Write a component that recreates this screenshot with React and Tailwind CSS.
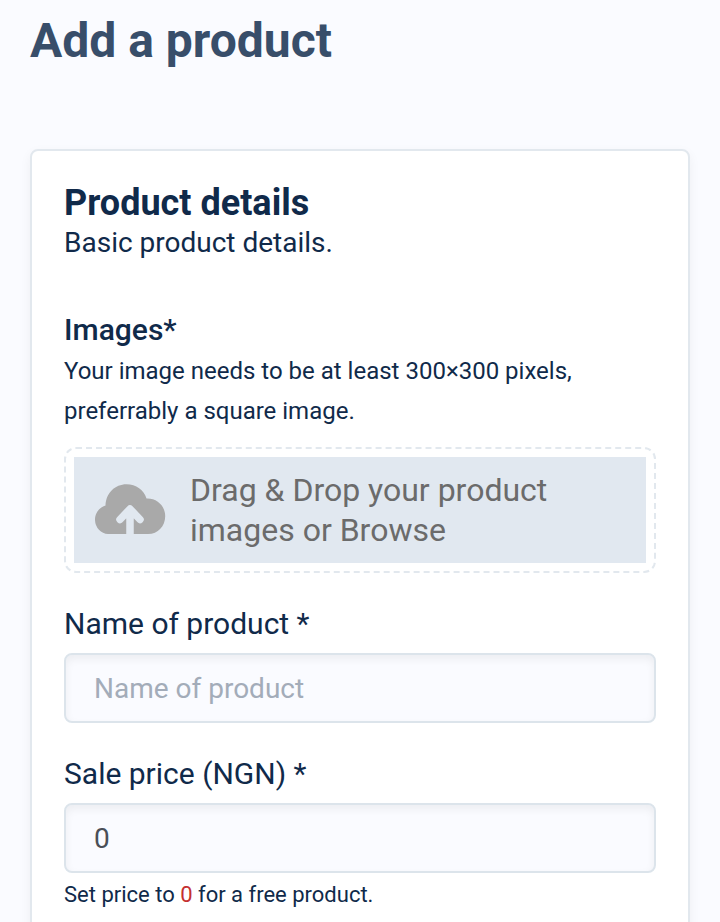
import React, { useState } from "react";

export default function App() {
  const [name, setName] = useState("");
  const [price, setPrice] = useState("0");

  return (
    <div className="min-h-screen bg-[#fafbff] px-[30px] pt-[9px] font-[Roboto,sans-serif] text-[#102a4a]">
      <h1 className="text-5xl leading-16 font-bold text-[#384e6a]">Add a product</h1>

      <form
        className="mt-[76px] rounded-lg border-2 border-[#e2e8ee] bg-white px-8 pt-8 pb-12 shadow-[0_4px_12px_rgba(0,0,0,0.05)]"
        onSubmit={(e) => e.preventDefault()}
      >
        <h2 className="text-4xl leading-10 font-bold">Product details</h2>
        <p className="text-[28px] leading-10">Basic product details.</p>

        {/* Images */}
        <h3 className="mt-[47px] mb-px text-[30px] leading-10 font-medium">Images*</h3>
        <p className="text-2xl leading-10">
          Your image needs to be at least 300×300 pixels, preferrably a square image.
        </p>
        <div className="mt-4 rounded-xl border-2 border-dashed border-[#e2e8ee] p-2">
          <button
            type="button"
            className="flex w-full items-center gap-6 bg-[#e1e8f0] px-5 py-[13px] text-left text-[32px] leading-10 text-[#6b6b6b]"
          >
            <UploadIcon />
            <span>Drag &amp; Drop your product images or Browse</span>
          </button>
        </div>

        <Field id="name" label="Name of product *">
          <TextInput
            id="name"
            placeholder="Name of product"
            value={name}
            onChange={(e) => setName(e.target.value)}
          />
        </Field>

        <Field id="price" label="Sale price (NGN) *">
          <TextInput
            id="price"
            inputMode="numeric"
            value={price}
            onChange={(e) => setPrice(e.target.value)}
          />
        </Field>
        <p className="mt-1 text-[22px] leading-9">
          Set price to <span className="text-[#c53030]">0</span> for a free product.
        </p>
      </form>
    </div>
  );
}

const Field = ({ id, label, children }) => (
  <div className="mt-[31px]">
    <label htmlFor={id} className="mb-[9px] block text-[30px] leading-10">
      {label}
    </label>
    {children}
  </div>
);

const TextInput = (props) => (
  <input
    type="text"
    className="block h-[70px] w-full rounded-lg border-2 border-[#dce4eb] bg-[#fafbff] px-7 text-[28px] text-[#4a4f57] shadow-[inset_0_4px_8px_rgba(0,0,0,0.06)] outline-none placeholder:text-[#a3acb9]"
    {...props}
  />
);

const UploadIcon = () => (
  <svg viewBox="0 0 72 52" className="h-[52px] w-[72px] shrink-0" aria-hidden="true">
    <path
      fill="#a9a9a9"
      d="M14 50A13.500 14.500 0 0 1 1 36C1 28.500 6 23 11.500 21.500C12 9 21 0.300 32.500 0.300C42 0.300 50 6 52.500 14.500C63 14 71.200 22 71.200 32.200C71.200 42 64 50 54 50Z"
    />
    <path
      d="M36 54V26M26 35.500L36 25L46 35.500"
      fill="none"
      stroke="#e1e8f0"
      strokeWidth="7.500"
      strokeLinecap="round"
      strokeLinejoin="round"
    />
  </svg>
);
